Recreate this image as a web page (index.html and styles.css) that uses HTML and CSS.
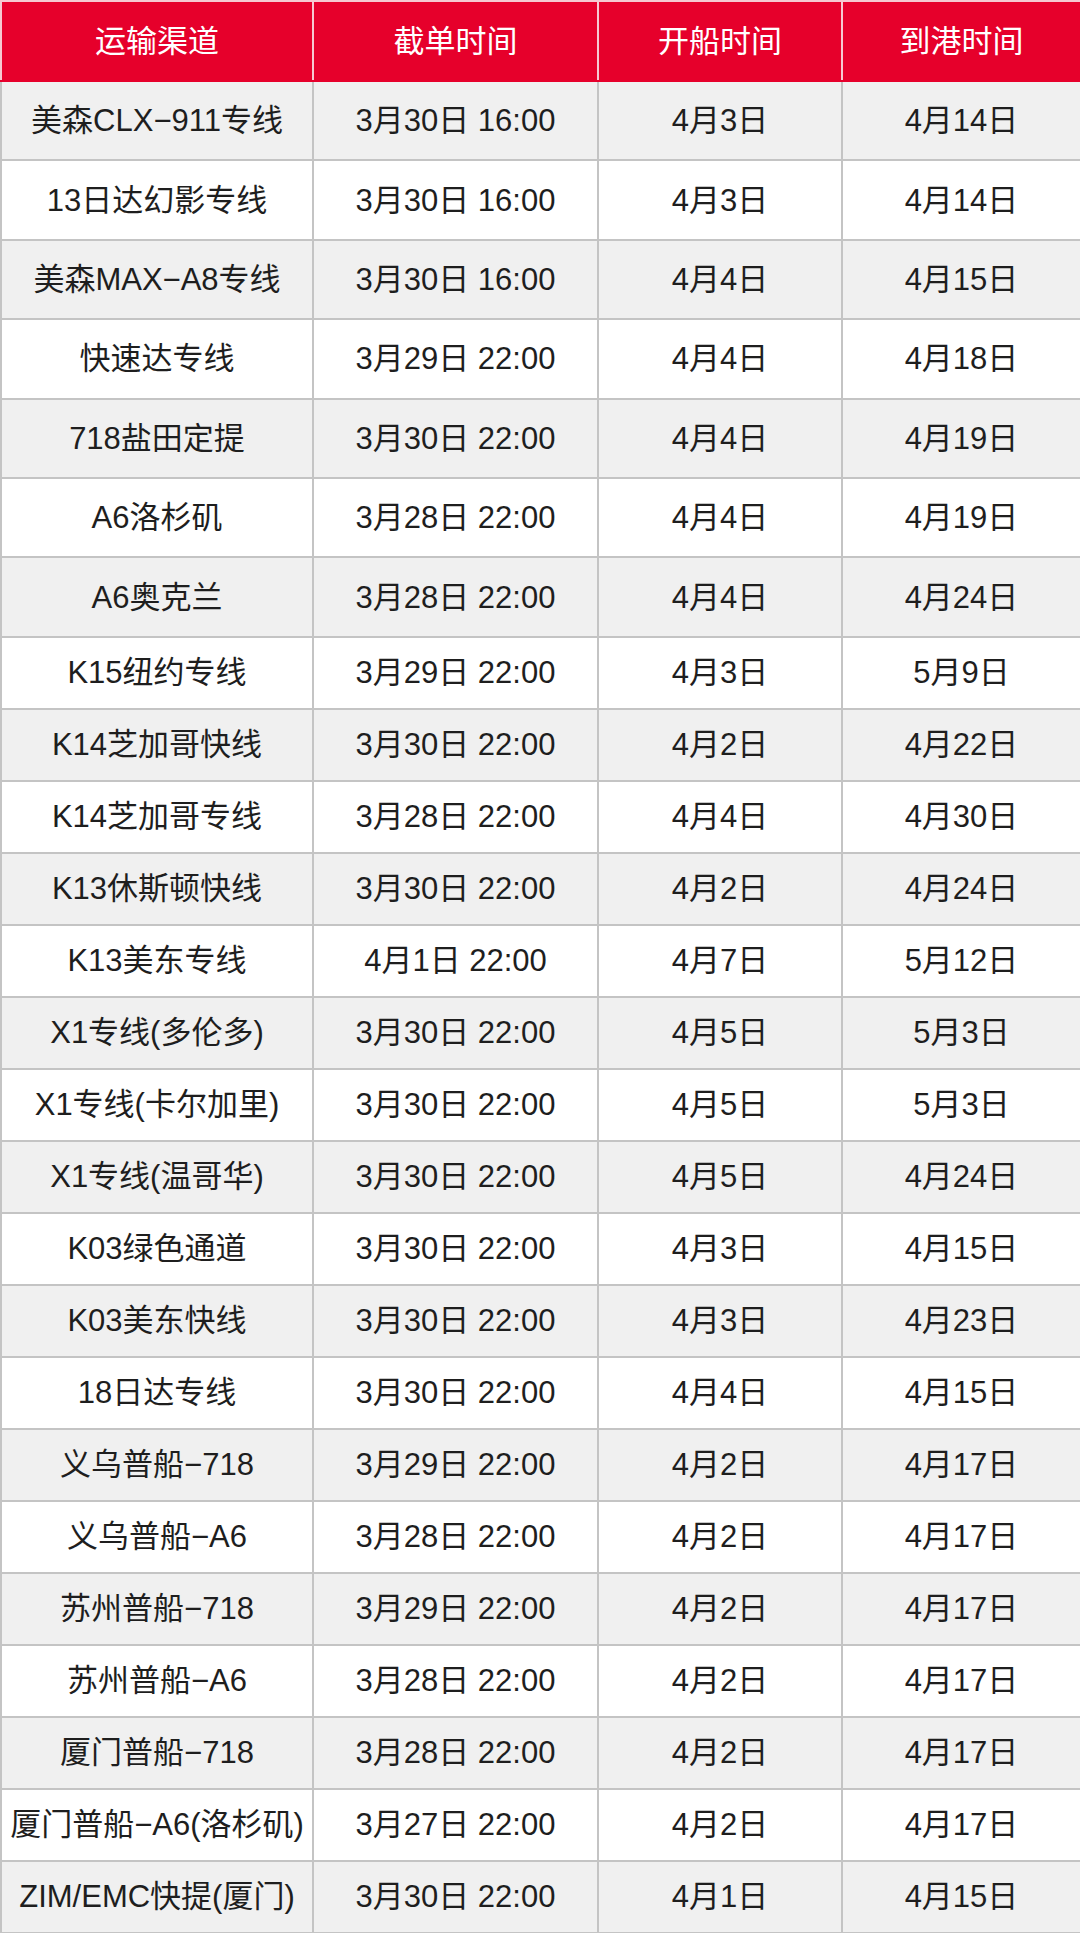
FILE: index.html
```html
<!DOCTYPE html>
<html lang="zh-CN">
<head>
<meta charset="utf-8">
<title>运输渠道时间表</title>
<link rel="stylesheet" href="styles.css">
</head>
<body>
<table class="schedule">
  <colgroup>
    <col class="c1"><col class="c2"><col class="c3"><col class="c4">
  </colgroup>
  <thead>
    <tr class="head"><th>运输渠道</th><th>截单时间</th><th>开船时间</th><th>到港时间</th></tr>
  </thead>
  <tbody>
    <tr class="tall"><td>美森CLX−911专线</td><td>3月30日 16:00</td><td>4月3日</td><td>4月14日</td></tr>
    <tr class="tall"><td>13日达幻影专线</td><td>3月30日 16:00</td><td>4月3日</td><td>4月14日</td></tr>
    <tr class="tall"><td>美森MAX−A8专线</td><td>3月30日 16:00</td><td>4月4日</td><td>4月15日</td></tr>
    <tr class="tall"><td>快速达专线</td><td>3月29日 22:00</td><td>4月4日</td><td>4月18日</td></tr>
    <tr class="tall"><td>718盐田定提</td><td>3月30日 22:00</td><td>4月4日</td><td>4月19日</td></tr>
    <tr class="tall"><td>A6洛杉矶</td><td>3月28日 22:00</td><td>4月4日</td><td>4月19日</td></tr>
    <tr class="tall"><td>A6奥克兰</td><td>3月28日 22:00</td><td>4月4日</td><td>4月24日</td></tr>
    <tr><td>K15纽约专线</td><td>3月29日 22:00</td><td>4月3日</td><td>5月9日</td></tr>
    <tr><td>K14芝加哥快线</td><td>3月30日 22:00</td><td>4月2日</td><td>4月22日</td></tr>
    <tr><td>K14芝加哥专线</td><td>3月28日 22:00</td><td>4月4日</td><td>4月30日</td></tr>
    <tr><td>K13休斯顿快线</td><td>3月30日 22:00</td><td>4月2日</td><td>4月24日</td></tr>
    <tr><td>K13美东专线</td><td>4月1日 22:00</td><td>4月7日</td><td>5月12日</td></tr>
    <tr><td>X1专线(多伦多)</td><td>3月30日 22:00</td><td>4月5日</td><td>5月3日</td></tr>
    <tr><td>X1专线(卡尔加里)</td><td>3月30日 22:00</td><td>4月5日</td><td>5月3日</td></tr>
    <tr><td>X1专线(温哥华)</td><td>3月30日 22:00</td><td>4月5日</td><td>4月24日</td></tr>
    <tr><td>K03绿色通道</td><td>3月30日 22:00</td><td>4月3日</td><td>4月15日</td></tr>
    <tr><td>K03美东快线</td><td>3月30日 22:00</td><td>4月3日</td><td>4月23日</td></tr>
    <tr><td>18日达专线</td><td>3月30日 22:00</td><td>4月4日</td><td>4月15日</td></tr>
    <tr><td>义乌普船−718</td><td>3月29日 22:00</td><td>4月2日</td><td>4月17日</td></tr>
    <tr><td>义乌普船−A6</td><td>3月28日 22:00</td><td>4月2日</td><td>4月17日</td></tr>
    <tr><td>苏州普船−718</td><td>3月29日 22:00</td><td>4月2日</td><td>4月17日</td></tr>
    <tr><td>苏州普船−A6</td><td>3月28日 22:00</td><td>4月2日</td><td>4月17日</td></tr>
    <tr><td>厦门普船−718</td><td>3月28日 22:00</td><td>4月2日</td><td>4月17日</td></tr>
    <tr><td>厦门普船−A6(洛杉矶)</td><td>3月27日 22:00</td><td>4月2日</td><td>4月17日</td></tr>
    <tr><td>ZIM/EMC快提(厦门)</td><td>3月30日 22:00</td><td>4月1日</td><td>4月15日</td></tr>
  </tbody>
</table>
</body>
</html>
```

FILE: styles.css
```css
html, body {
  margin: 0;
  padding: 0;
  background: #ffffff;
}

.schedule {
  width: 1080px;
  border-collapse: collapse;
  table-layout: fixed;
  font-family: "Liberation Sans", "Noto Sans CJK SC", sans-serif;
  font-size: 31px;
  color: #1e1e1e;
}

.c1 { width: 312px; }
.c2 { width: 285px; }
.c3 { width: 244px; }
.c4 { width: 239px; }

.schedule th,
.schedule td {
  padding: 0;
  text-align: center;
  vertical-align: middle;
  white-space: nowrap;
  line-height: 1;
}

.schedule th {
  background: #e6002b;
  color: #ffffff;
  font-weight: normal;
  border: 2px solid #f6c9d1;
  border-bottom-color: #e6002b;
}

.head {
  height: 80px;
}

.schedule td {
  border: 2px solid #c4c4c4;
}

.schedule tbody tr {
  height: 72px;
}

.schedule tbody tr.tall {
  height: 79.4px;
}

.schedule tbody tr:nth-child(odd) td {
  background: #f0f0f0;
}

.schedule tbody tr:nth-child(even) td {
  background: #ffffff;
}
```
